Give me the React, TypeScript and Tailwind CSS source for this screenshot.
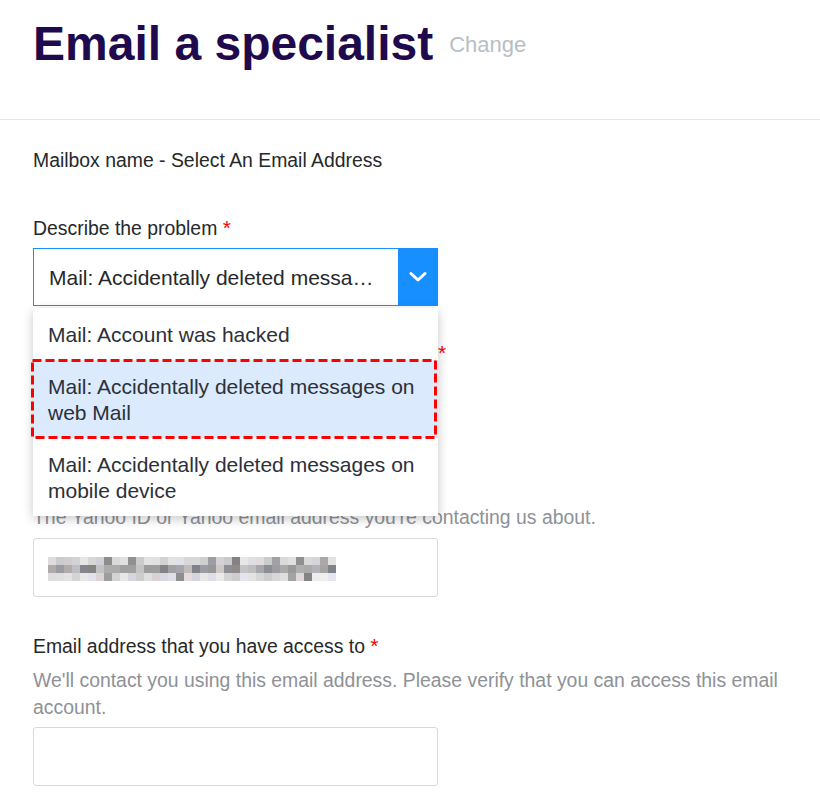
import React from "react";

const font = { fontFamily: '"Liberation Sans", Arial, sans-serif' };

// pixelated blur of the hidden email address
function Mosaic() {
  let seed = 11;
  const rnd = () => {
    seed = (seed * 9301 + 49297) % 233280;
    return seed / 233280;
  };
  const rows = [
    [200, 232, 0.18],
    [150, 205, 0.3],
    [205, 240, 0.14],
  ];
  const cells: { c: string; k: string }[] = [];
  rows.forEach(([lo, hi, darkChance], r) => {
    for (let i = 0; i < 36; i++) {
      let v = Math.round(lo + rnd() * (hi - lo));
      if (rnd() < darkChance) v = Math.round(128 + rnd() * 40);
      const t = rnd();
      const rr = t > 0.9 ? v + 6 : v;
      const bb = t < 0.25 ? v + 8 : v;
      cells.push({ c: `rgb(${Math.min(rr, 248)},${v},${Math.min(bb, 248)})`, k: `${r}-${i}` });
    }
  });
  return (
    <div className="grid grid-cols-[repeat(36,8px)] grid-rows-[repeat(3,8px)]">
      {cells.map(cell => (
        <div key={cell.k} style={{ backgroundColor: cell.c }} />
      ))}
    </div>
  );
}

function Star({ className = "" }: { className?: string }) {
  return <span className={`text-[#ff0000] text-[21px] leading-none ${className}`}>*</span>;
}

export default function App() {
  return (
    <div className="min-h-screen bg-white text-[#26282a]" style={font}>
      <header className="h-[120px] border-b border-[#e6e6e6] px-[33px] pt-[20px]">
        <div className="flex items-start">
          <h1 className="text-[48px] leading-[48px] font-bold text-[#1e0a4c]">Email a specialist</h1>
          <span className="ml-[16px] mt-[14px] text-[22px] leading-[22px] text-[#b6bec6]">Change</span>
        </div>
      </header>

      <main className="pl-[33px] pr-[20px] pt-[27px] text-[19.4px] leading-[27px]">
        <p>Mailbox name - Select An Email Address</p>

        <label className="block mt-[41px]">
          Describe the problem <Star />
        </label>
        <div className="relative mt-[6px] w-[405px]">
          <div className="flex h-[58px] border border-[#188fff]">
            <span className="flex-1 self-center truncate pl-[15px] pr-[18px] pt-[1px] text-[21px] leading-[26px] text-[#26282a]">
              Mail: Accidentally deleted messages on web Mail
            </span>
            <span className="flex w-[39px] items-center justify-center bg-[#188fff]">
              <svg width="18" height="12" viewBox="0 0 18 12" fill="none">
                <polyline points="2,2.5 9,9 16,2.5" stroke="#fff" strokeWidth="3" strokeLinecap="round" strokeLinejoin="round" />
              </svg>
            </span>
          </div>

          <ul className="absolute left-0 top-full z-10 mt-[2px] w-full bg-white text-[21px] leading-[26px] text-[#2c3038] shadow-[0_3px_10px_rgba(0,0,0,0.22)]">
            <li className="px-[15px] pt-[14px] pb-[12px]">Mail: Account was hacked</li>
            <li className="relative bg-[#dbeafc] px-[15px] pt-[14px] pb-[12px]">
              Mail: Accidentally deleted messages on web Mail
              <svg className="absolute -left-[2px] -top-[1px]" width="406" height="80" viewBox="0 0 406 80" fill="none">
                <rect x="1.5" y="1.5" width="403" height="77" stroke="#ff0000" strokeWidth="3" strokeDasharray="9 4" />
              </svg>
            </li>
            <li className="px-[15px] pt-[14px] pb-[12px]">Mail: Accidentally deleted messages on mobile device</li>
          </ul>
        </div>

        <label className="mt-[35px] flex items-baseline">
          <span className="inline-block w-[404px] overflow-hidden whitespace-nowrap">
            Email address or Yahoo ID of the account you need help with
          </span>
          <Star className="ml-[1px] -translate-y-[1px]" />
        </label>
        <div className="mt-[7px] h-[59px] w-[405px] rounded-[3px] border border-[#d8d8de]" />

        <label className="block mt-[36px]">
          Yahoo ID <Star />
        </label>
        <p className="mt-[7px] text-[#8e9197]">The Yahoo ID or Yahoo email address you're contacting us about.</p>
        <div className="mt-[7px] flex h-[59px] w-[405px] items-start rounded-[3px] border border-[#d8d8de] pl-[14px] pt-[18px]">
          <Mosaic />
        </div>

        <label className="block mt-[36px]">
          Email address that you have access to <Star />
        </label>
        <p className="mt-[7px] text-[#8e9197]">
          We'll contact you using this email address. Please verify that you can access this email account.
        </p>
        <div className="mt-[6px] h-[59px] w-[405px] rounded-[3px] border border-[#d8d8de]" />
      </main>
    </div>
  );
}
